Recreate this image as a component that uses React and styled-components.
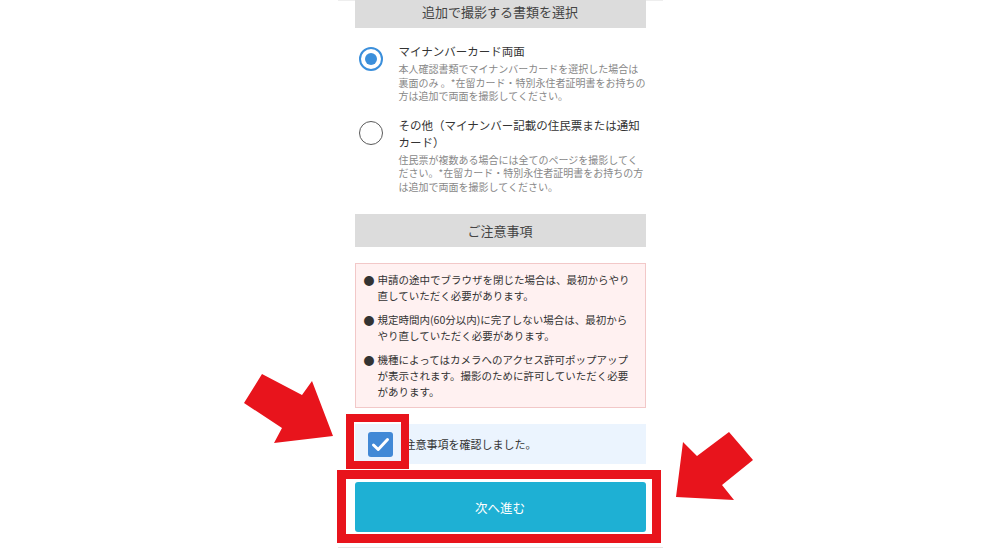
import React, { useState } from "react";
import styled, { createGlobalStyle } from "styled-components";

const GlobalStyle = createGlobalStyle`
    body {
        margin: 0;
        background: #fff;
        font-family: "Noto Sans CJK JP", "Noto Sans", sans-serif;
    }
`;

const Screen = styled.div`
    position: relative;
    width: 1000px;
    height: 550px;
    overflow: hidden;
`;

const Column = styled.div`
    width: 325px;
    margin: 0 auto;
    box-sizing: border-box;
    padding: 0 17px 15px;
    border-top: 1px solid #eee;
    border-bottom: 1px solid #e6e6e6;
    display: flex;
    flex-direction: column;
`;

const SectionTitle = styled.div`
    height: 33px;
    margin-top: ${props => props.$offset || 0}px;
    background: #dcdcdc;
    color: #444;
    font-size: 13px;
    display: flex;
    align-items: center;
    justify-content: center;
`;

const Options = styled.div`
    display: flex;
    flex-direction: column;
    gap: 14px;
    padding: 15px 0 21px;
`;

const Option = styled.label`
    display: flex;
    gap: 16px;
    cursor: pointer;
`;

const Radio = styled.span`
    flex: none;
    width: 24px;
    height: 24px;
    box-sizing: border-box;
    margin: 4px 0 0 4px;
    border-radius: 50%;
    border: ${props => props.$checked ? "2px solid #3b8fdb" : "1.5px solid #5a5a5a"};
    display: flex;
    align-items: center;
    justify-content: center;
    &::after {
        content: "";
        width: 12px;
        height: 12px;
        border-radius: 50%;
        background: ${props => props.$checked ? "#3b8fdb" : "transparent"};
    }
`;

const OptionText = styled.div`
    display: flex;
    flex-direction: column;
    gap: 2px;
    white-space: nowrap;
`;

const OptionTitle = styled.span`
    font-size: 11.5px;
    line-height: 17px;
    color: #333;
`;

const OptionNote = styled.span`
    font-size: 10px;
    line-height: 13.5px;
    color: #888;
`;

const NoticeBox = styled.ul`
    list-style: none;
    margin: 16px 0 0;
    padding: 8px 8px 7px;
    background: #fff1f1;
    border: 1px solid #f2c8c8;
    display: flex;
    flex-direction: column;
    gap: 8px;
`;

const NoticeItem = styled.li`
    display: flex;
    font-size: 10.5px;
    line-height: 16px;
    color: #333;
    white-space: nowrap;
`;

const Bullet = styled.span`
    flex: none;
    width: 14px;
    font-size: 11px;
`;

const ConfirmRow = styled.label`
    margin-top: 16px;
    height: 40px;
    padding-left: 13px;
    background: #ebf4fe;
    display: flex;
    align-items: center;
    gap: 12px;
    font-size: 11px;
    color: #333;
    cursor: pointer;
`;

const Marked = styled.div`
    position: relative;
    display: flex;
`;

const Frame = styled.div`
    position: absolute;
    top: ${props => props.$top}px;
    right: ${props => props.$right}px;
    bottom: ${props => props.$bottom}px;
    left: ${props => props.$left}px;
    border: ${props => props.$width}px solid #e8141c;
    pointer-events: none;
`;

const CheckBox = styled.span`
    width: 25px;
    height: 25px;
    border-radius: 3px;
    background: ${props => props.$checked ? "#4189d6" : "#fff"};
    border: ${props => props.$checked ? "none" : "1px solid #999"};
    box-sizing: border-box;
    display: flex;
    align-items: center;
    justify-content: center;
`;

const NextBtn = styled.button`
    flex: 1;
    height: 50px;
    border: none;
    border-radius: 3px;
    background: #1eb0d4;
    color: #fff;
    font-family: inherit;
    font-size: 12.5px;
    cursor: pointer;
`;

const ButtonWrap = styled(Marked)`
    margin-top: 18px;
`;

const Arrows = styled.svg`
    position: absolute;
    top: 0;
    left: 0;
    pointer-events: none;
`;

const notices = [
    ["申請の途中でブラウザを閉じた場合は、最初からやり", "直していただく必要があります。"],
    ["規定時間内(60分以内)に完了しない場合は、最初から", "やり直していただく必要があります。"],
    ["機種によってはカメラへのアクセス許可ポップアップ", "が表示されます。撮影のために許可していただく必要", "があります。"],
];

const App = () => {
    const [doc, setDoc] = useState("mynumber");
    const [agreed, setAgreed] = useState(true);

    return (
        <Screen>
            <GlobalStyle />
            <Column>
                <SectionTitle $offset={-6}>追加で撮影する書類を選択</SectionTitle>
                <Options>
                    <Option onClick={() => setDoc("mynumber")}>
                        <Radio $checked={doc === "mynumber"} />
                        <OptionText>
                            <OptionTitle>マイナンバーカード両面</OptionTitle>
                            <OptionNote>
                                本人確認書類でマイナンバーカードを選択した場合は<br />
                                裏面のみ 。*在留カード・特別永住者証明書をお持ちの<br />
                                方は追加で両面を撮影してください。
                            </OptionNote>
                        </OptionText>
                    </Option>
                    <Option onClick={() => setDoc("other")}>
                        <Radio $checked={doc === "other"} />
                        <OptionText>
                            <OptionTitle>
                                その他（マイナンバー記載の住民票または通知<br />
                                カード）
                            </OptionTitle>
                            <OptionNote>
                                住民票が複数ある場合には全てのページを撮影してく<br />
                                ださい。*在留カード・特別永住者証明書をお持ちの方<br />
                                は追加で両面を撮影してください。
                            </OptionNote>
                        </OptionText>
                    </Option>
                </Options>

                <SectionTitle>ご注意事項</SectionTitle>
                <NoticeBox>
                    {notices.map((lines, i) => (
                        <NoticeItem key={i}>
                            <Bullet>●</Bullet>
                            <span>
                                {lines.map((line, j) => (
                                    <React.Fragment key={j}>
                                        {j > 0 && <br />}
                                        {line}
                                    </React.Fragment>
                                ))}
                            </span>
                        </NoticeItem>
                    ))}
                </NoticeBox>

                <ConfirmRow onClick={() => setAgreed(!agreed)}>
                    <Marked>
                        <CheckBox $checked={agreed}>
                            {agreed && (
                                <svg width="25" height="25" viewBox="0 0 25 25">
                                    <polyline points="5.5,13 10.2,17.5 19.5,7.5" fill="none" stroke="#fff" strokeWidth="3" strokeLinecap="round" strokeLinejoin="round" />
                                </svg>
                            )}
                        </CheckBox>
                        <Frame $top={-18} $right={-16} $bottom={-12} $left={-22} $width={8} />
                    </Marked>
                    <span>注意事項を確認しました。</span>
                </ConfirmRow>

                <ButtonWrap>
                    <NextBtn>次へ進む</NextBtn>
                    <Frame $top={-12} $right={-15} $bottom={-11} $left={-18} $width={9} />
                </ButtonWrap>
            </Column>

            <Arrows width="1000" height="550" viewBox="0 0 1000 550">
                <polygon points="262,374 302,395 312,381 333,436 274,443 282,428 244,403" fill="#e8141c" />
                <polygon points="676,497 683,442 697,456 729,432 753,460 722,485 734,500" fill="#e8141c" />
            </Arrows>
        </Screen>
    );
};

export default App;
